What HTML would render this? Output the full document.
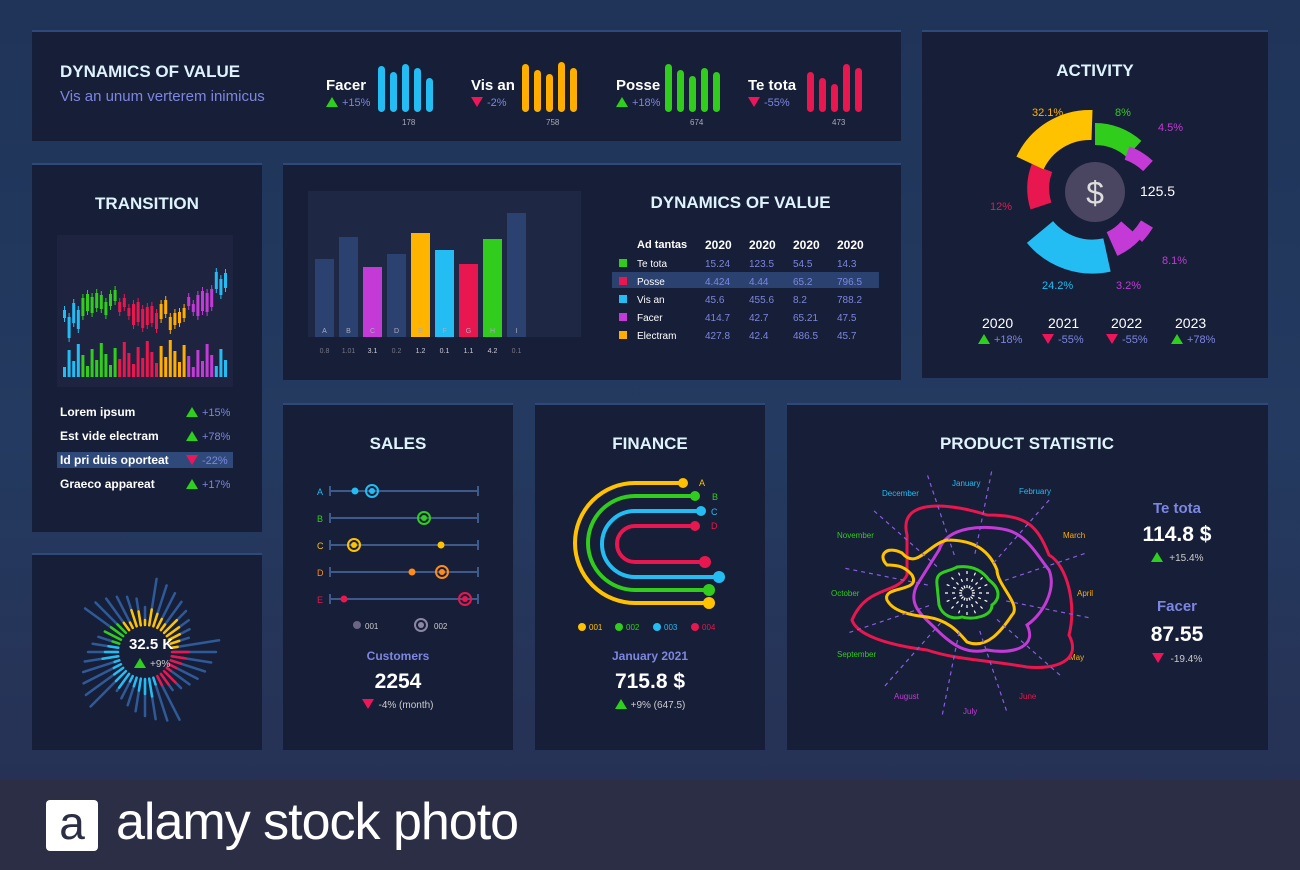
<!DOCTYPE html>
<html><head><meta charset="utf-8"><style>
*{margin:0;padding:0;box-sizing:border-box}
body{width:1300px;height:870px;overflow:hidden;background:linear-gradient(180deg,#1f3458 0%,#243a60 50%,#272f52 100%);font-family:"Liberation Sans",sans-serif;color:#fff;position:relative}
.p{position:absolute;background:#171e37;border-top:2px solid #2f4a78}
.t{position:absolute;font-weight:bold;font-size:17px;color:#dff3ff;text-align:center;width:100%}
.ab{position:absolute;font-size:11px}
svg{position:absolute;left:0;top:0}
.up{color:#7d86e0}
.tri-u{display:inline-block;width:0;height:0;border-left:6px solid transparent;border-right:6px solid transparent;border-bottom:10px solid #2ed01e;vertical-align:-1px;margin-right:4px}
.tri-d{display:inline-block;width:0;height:0;border-left:6px solid transparent;border-right:6px solid transparent;border-top:10px solid #f0155a;vertical-align:-1px;margin-right:4px}
.bar{position:absolute;left:0;right:0;top:780px;height:90px;background:#2b2e45}
.logo{position:absolute;left:46px;top:800px;width:52px;height:51px;background:#fff;border-radius:4px;color:#2b2e45;font-size:46px;text-align:center;line-height:46px}
.lt{position:absolute;left:116px;top:792px;font-size:52px;color:#fff;letter-spacing:-1px}
td{font-size:10px;padding:0}
</style></head><body>

<div class="p" style="left:32px;top:30px;width:869px;height:111px">
<div style="position:absolute;left:28px;top:30px;font-size:17px;font-weight:bold;color:#dff3ff">DYNAMICS OF VALUE</div>
<div style="position:absolute;left:28px;top:56px;font-size:15px;color:#7d86e0">Vis an unum verterem inimicus</div>
<svg width="869" height="111" id="topsvg"></svg>
<div style="position:absolute;left:294px;top:45px;font-size:15px;font-weight:bold">Facer</div>
<div style="position:absolute;left:294px;top:65px;font-size:11px" class="up"><span class="tri-u"></span>+15%</div>
<div style="position:absolute;left:439px;top:45px;font-size:15px;font-weight:bold">Vis an</div>
<div style="position:absolute;left:439px;top:65px;font-size:11px" class="up"><span class="tri-d"></span>-2%</div>
<div style="position:absolute;left:584px;top:45px;font-size:15px;font-weight:bold">Posse</div>
<div style="position:absolute;left:584px;top:65px;font-size:11px" class="up"><span class="tri-u"></span>+18%</div>
<div style="position:absolute;left:716px;top:45px;font-size:15px;font-weight:bold">Te tota</div>
<div style="position:absolute;left:716px;top:65px;font-size:11px" class="up"><span class="tri-d"></span>-55%</div>
<div class="ab" style="left:370px;top:86px;font-size:8px;color:#aab">178</div>
<div class="ab" style="left:514px;top:86px;font-size:8px;color:#aab">758</div>
<div class="ab" style="left:658px;top:86px;font-size:8px;color:#aab">674</div>
<div class="ab" style="left:800px;top:86px;font-size:8px;color:#aab">473</div>
</div>

<div class="p" style="left:922px;top:30px;width:346px;height:348px">
<div class="t" style="top:29px">ACTIVITY</div>
<svg width="346" height="348">
<circle cx="173" cy="160" r="30" fill="#4a4560"/>
<text x="173" y="172" fill="#ddd" font-size="32" text-anchor="middle" font-family="Liberation Sans">$</text>
<g fill="none" stroke-width="22">
<path d="M119 174 A56 56 0 0 1 120 136" stroke="#e8174f"/>
<path d="M108 131 A66 66 0 0 1 170 93" stroke="#ffc200" stroke-width="30"/>
<path d="M173 102 A58 58 0 0 1 212 117" stroke="#31cd1c"/>
<path d="M205 121 A60 60 0 0 1 226 134" stroke="#c43ad6" stroke-width="14"/>
<path d="M209 198 A56 56 0 0 1 190 212" stroke="#c43ad6" stroke-width="26"/>
<path d="M225 192 A75 75 0 0 1 215 205" stroke="#c43ad6" stroke-width="14"/>
<path d="M185 223 A68 68 0 0 1 118 200" stroke="#23bdf4" stroke-width="34"/>
</g>
<text x="110" y="84" fill="#ffb400" font-size="11">32.1%</text>
<text x="193" y="84" fill="#31cd1c" font-size="11">8%</text>
<text x="236" y="99" fill="#c43ad6" font-size="11">4.5%</text>
<text x="68" y="178" fill="#e8174f" font-size="11">12%</text>
<text x="218" y="164" fill="#fff" font-size="14">125.5</text>
<text x="240" y="232" fill="#c43ad6" font-size="11">8.1%</text>
<text x="120" y="257" fill="#23bdf4" font-size="11">24.2%</text>
<text x="194" y="257" fill="#c43ad6" font-size="11">3.2%</text>
</svg>
<div class="ab" style="left:60px;top:283px;font-size:14px">2020</div>
<div class="ab" style="left:126px;top:283px;font-size:14px">2021</div>
<div class="ab" style="left:189px;top:283px;font-size:14px">2022</div>
<div class="ab" style="left:253px;top:283px;font-size:14px">2023</div>
<div class="ab up" style="left:56px;top:302px"><span class="tri-u"></span>+18%</div>
<div class="ab up" style="left:120px;top:302px"><span class="tri-d"></span>-55%</div>
<div class="ab up" style="left:184px;top:302px"><span class="tri-d"></span>-55%</div>
<div class="ab up" style="left:249px;top:302px"><span class="tri-u"></span>+78%</div>
</div>

<div class="p" style="left:32px;top:163px;width:230px;height:369px">
<div class="t" style="top:29px">TRANSITION</div>
<div style="position:absolute;left:25px;top:70px;width:176px;height:152px;background:#1e2440"></div>
<svg width="230" height="369" id="candles"></svg>
<div class="ab" style="left:28px;top:240px;font-size:12px;font-weight:bold">Lorem ipsum</div>
<div class="ab" style="left:28px;top:264px;font-size:12px;font-weight:bold">Est vide electram</div>
<div style="position:absolute;left:25px;top:287px;width:176px;height:16px;background:#2f4a7a"></div>
<div class="ab" style="left:28px;top:288px;font-size:12px;font-weight:bold">Id pri duis oporteat</div>
<div class="ab" style="left:28px;top:312px;font-size:12px;font-weight:bold">Graeco appareat</div>
<div class="ab up" style="left:154px;top:242px"><span class="tri-u"></span>+15%</div>
<div class="ab up" style="left:154px;top:266px"><span class="tri-u"></span>+78%</div>
<div class="ab up" style="left:154px;top:290px"><span class="tri-d"></span>-22%</div>
<div class="ab up" style="left:154px;top:314px"><span class="tri-u"></span>+17%</div>
</div>

<div class="p" style="left:283px;top:163px;width:618px;height:217px">
<div style="position:absolute;left:25px;top:26px;width:273px;height:146px;background:#1e2744"></div>
<svg width="618" height="217" id="bars"></svg>
<div style="position:absolute;left:330px;top:28px;width:255px;text-align:center;font-size:17px;font-weight:bold;color:#dff3ff">DYNAMICS OF VALUE</div>
<div style="position:absolute;left:329px;top:107px;width:267px;height:16px;background:#2b4270"></div>
<table style="position:absolute;left:336px;top:70px;border-collapse:collapse">
<tr style="height:20px"><td style="width:18px"></td><td style="width:68px;font-size:11px;font-weight:bold">Ad tantas</td><td style="width:44px;font-size:12px;font-weight:bold">2020</td><td style="width:44px;font-size:12px;font-weight:bold">2020</td><td style="width:44px;font-size:12px;font-weight:bold">2020</td><td style="font-size:12px;font-weight:bold">2020</td></tr>
<tr style="height:18px"><td><i style="display:inline-block;width:8px;height:8px;background:#31cd1c"></i></td><td>Te tota</td><td class="up">15.24</td><td class="up">123.5</td><td class="up">54.5</td><td class="up">14.3</td></tr>
<tr style="height:18px"><td><i style="display:inline-block;width:8px;height:8px;background:#e8174f"></i></td><td>Posse</td><td class="up">4.424</td><td class="up">4.44</td><td class="up">65.2</td><td class="up">796.5</td></tr>
<tr style="height:18px"><td><i style="display:inline-block;width:8px;height:8px;background:#23bdf4"></i></td><td>Vis an</td><td class="up">45.6</td><td class="up">455.6</td><td class="up">8.2</td><td class="up">788.2</td></tr>
<tr style="height:18px"><td><i style="display:inline-block;width:8px;height:8px;background:#c43ad6"></i></td><td>Facer</td><td class="up">414.7</td><td class="up">42.7</td><td class="up">65.21</td><td class="up">47.5</td></tr>
<tr style="height:18px"><td><i style="display:inline-block;width:8px;height:8px;background:#ffae00"></i></td><td>Electram</td><td class="up">427.8</td><td class="up">42.4</td><td class="up">486.5</td><td class="up">45.7</td></tr>
</table>
</div>

<div class="p" style="left:32px;top:553px;width:230px;height:197px">
<svg width="230" height="197" id="radial"></svg>
<div class="ab" style="left:97px;top:81px;font-size:15px;font-weight:bold">32.5 K</div>
<div class="ab" style="left:102px;top:103px;font-size:10px;color:#ccc"><span class="tri-u"></span>+9%</div>
</div>

<div class="p" style="left:283px;top:403px;width:230px;height:347px">
<div class="t" style="top:29px">SALES</div>
<svg width="230" height="347">
<g stroke="#3d5a8a" stroke-width="2"><line x1="47" y1="86" x2="195" y2="86"/><line x1="47" y1="113" x2="195" y2="113"/><line x1="47" y1="140" x2="195" y2="140"/><line x1="47" y1="167" x2="195" y2="167"/><line x1="47" y1="194" x2="195" y2="194"/>
<line x1="47" y1="81" x2="47" y2="91"/><line x1="195" y1="81" x2="195" y2="91"/><line x1="47" y1="108" x2="47" y2="118"/><line x1="195" y1="108" x2="195" y2="118"/><line x1="47" y1="135" x2="47" y2="145"/><line x1="195" y1="135" x2="195" y2="145"/><line x1="47" y1="162" x2="47" y2="172"/><line x1="195" y1="162" x2="195" y2="172"/><line x1="47" y1="189" x2="47" y2="199"/><line x1="195" y1="189" x2="195" y2="199"/></g>
<g font-size="9"><text x="34" y="90" fill="#23bdf4">A</text><text x="34" y="117" fill="#31cd1c">B</text><text x="34" y="144" fill="#ffc200">C</text><text x="34" y="171" fill="#ff8c1a">D</text><text x="34" y="198" fill="#e8174f">E</text></g>
<circle cx="72" cy="86" r="3.5" fill="#23bdf4"/><circle cx="89" cy="86" r="6" fill="none" stroke="#23bdf4" stroke-width="2"/><circle cx="89" cy="86" r="3" fill="#23bdf4"/>
<circle cx="141" cy="113" r="6" fill="none" stroke="#31cd1c" stroke-width="2"/><circle cx="141" cy="113" r="3" fill="#31cd1c"/>
<circle cx="71" cy="140" r="6" fill="none" stroke="#ffc200" stroke-width="2"/><circle cx="71" cy="140" r="3" fill="#ffc200"/><circle cx="158" cy="140" r="3.5" fill="#ffc200"/>
<circle cx="129" cy="167" r="3.5" fill="#ff8c1a"/><circle cx="159" cy="167" r="6" fill="none" stroke="#ff8c1a" stroke-width="2"/><circle cx="159" cy="167" r="3" fill="#ff8c1a"/>
<circle cx="61" cy="194" r="3.5" fill="#e8174f"/><circle cx="182" cy="194" r="6" fill="none" stroke="#e8174f" stroke-width="2"/><circle cx="182" cy="194" r="3" fill="#e8174f"/>
<circle cx="74" cy="220" r="4" fill="#6a6585"/><text x="82" y="224" fill="#ccc" font-size="8">001</text>
<circle cx="138" cy="220" r="6" fill="none" stroke="#8c86a5" stroke-width="2"/><circle cx="138" cy="220" r="3" fill="#8c86a5"/><text x="151" y="224" fill="#ccc" font-size="8">002</text>
</svg>
<div class="ab" style="left:0;width:230px;text-align:center;top:244px;font-size:12px;font-weight:bold;color:#7d86e0">Customers</div>
<div class="ab" style="left:0;width:230px;text-align:center;top:265px;font-size:21px;font-weight:bold">2254</div>
<div class="ab" style="left:0;width:230px;text-align:center;top:294px;font-size:10px;color:#ccc"><span class="tri-d"></span>-4% (month)</div>
</div>

<div class="p" style="left:535px;top:403px;width:230px;height:347px">
<div class="t" style="top:29px">FINANCE</div>
<svg width="230" height="347" fill="none" stroke-width="4" stroke-linecap="round">
<path d="M148 78 H100 A60 60 0 0 0 100 198 H174" stroke="#ffc200"/>
<path d="M160 91 H100 A47 47 0 0 0 100 185 H174" stroke="#31cd1c"/>
<path d="M166 106 H100 A33 33 0 0 0 100 172 H184" stroke="#23bdf4"/>
<path d="M160 121 H100 A18 18 0 0 0 100 157 H170" stroke="#e8174f"/>
<g stroke="none"><circle cx="148" cy="78" r="5" fill="#ffc200"/><circle cx="160" cy="91" r="5" fill="#31cd1c"/><circle cx="166" cy="106" r="5" fill="#23bdf4"/><circle cx="160" cy="121" r="5" fill="#e8174f"/>
<circle cx="170" cy="157" r="6" fill="#e8174f"/><circle cx="184" cy="172" r="6" fill="#23bdf4"/><circle cx="174" cy="185" r="6" fill="#31cd1c"/><circle cx="174" cy="198" r="6" fill="#ffc200"/>
<g font-size="9" stroke="none"><text x="164" y="81" fill="#ffc200">A</text><text x="177" y="95" fill="#31cd1c">B</text><text x="176" y="110" fill="#23bdf4">C</text><text x="176" y="124" fill="#e8174f">D</text>
<circle cx="47" cy="222" r="4" fill="#ffc200"/><text x="54" y="225" fill="#ffc200" font-size="8">001</text>
<circle cx="84" cy="222" r="4" fill="#31cd1c"/><text x="91" y="225" fill="#31cd1c" font-size="8">002</text>
<circle cx="122" cy="222" r="4" fill="#23bdf4"/><text x="129" y="225" fill="#23bdf4" font-size="8">003</text>
<circle cx="160" cy="222" r="4" fill="#e8174f"/><text x="167" y="225" fill="#e8174f" font-size="8">004</text></g></g>
</svg>
<div class="ab" style="left:0;width:230px;text-align:center;top:244px;font-size:12px;font-weight:bold;color:#7d86e0">January 2021</div>
<div class="ab" style="left:0;width:230px;text-align:center;top:265px;font-size:21px;font-weight:bold">715.8 $</div>
<div class="ab" style="left:0;width:230px;text-align:center;top:294px;font-size:10px;color:#ccc"><span class="tri-u"></span>+9% (647.5)</div>
</div>

<div class="p" style="left:787px;top:403px;width:481px;height:347px">
<div class="t" style="top:29px;width:480px">PRODUCT STATISTIC</div>
<svg width="481" height="347" id="prod">
<g font-size="8">
<text x="95" y="91" fill="#23bdf4">December</text><text x="165" y="81" fill="#23bdf4">January</text><text x="232" y="89" fill="#23bdf4">February</text>
<text x="50" y="133" fill="#31cd1c">November</text><text x="276" y="133" fill="#ffae00">March</text>
<text x="44" y="191" fill="#31cd1c">October</text><text x="290" y="191" fill="#ffae00">April</text>
<text x="50" y="252" fill="#31cd1c">September</text><text x="282" y="255" fill="#ffae00">May</text>
<text x="107" y="294" fill="#c43ad6">August</text><text x="232" y="294" fill="#e8174f">June</text><text x="176" y="309" fill="#c43ad6">July</text>
</g>
<g fill="none" stroke-width="3">
<path d="M120 130 C110 90 170 100 200 110 C240 110 250 120 262 150 C280 160 290 200 282 230 C295 255 270 265 240 262 C200 255 170 255 140 245 C100 240 70 230 65 215 C80 180 110 190 120 170 Z" stroke="#e8174f"/>
<path d="M152 145 C160 120 200 120 220 125 C240 130 250 150 262 165 C270 185 255 210 240 220 C250 240 230 250 200 245 C180 250 165 240 150 225 C135 210 120 200 130 180 Z" stroke="#c43ad6"/>
<path d="M100 160 C90 150 100 140 115 148 C130 165 140 140 160 135 C180 135 200 140 210 165 C210 180 235 200 225 210 C215 225 200 245 180 237 C170 225 160 215 140 212 C120 210 105 205 100 195 C95 180 135 188 125 170 C118 162 112 160 100 160 Z" stroke="#ffc200"/>
<path d="M150 180 C148 165 160 168 170 162 C185 160 195 165 202 175 C215 185 212 195 205 200 C205 212 185 215 175 212 C165 215 155 210 152 200 Z" stroke="#31cd1c"/>
</g>
<g stroke="#8a5ce0" stroke-width="1.2" stroke-dasharray="4 4" id="rays"></g>
</svg>
<div class="ab" style="left:340px;top:95px;width:100px;text-align:center;font-size:15px;font-weight:bold;color:#7d86e0">Te tota</div>
<div class="ab" style="left:340px;top:118px;width:100px;text-align:center;font-size:21px;font-weight:bold">114.8 $</div>
<div class="ab" style="left:340px;top:147px;width:100px;text-align:center;font-size:10px;color:#ccc"><span class="tri-u"></span>&nbsp;+15.4%</div>
<div class="ab" style="left:340px;top:193px;width:100px;text-align:center;font-size:15px;font-weight:bold;color:#7d86e0">Facer</div>
<div class="ab" style="left:340px;top:218px;width:100px;text-align:center;font-size:21px;font-weight:bold">87.55</div>
<div class="ab" style="left:340px;top:248px;width:100px;text-align:center;font-size:10px;color:#ccc"><span class="tri-d"></span>&nbsp;-19.4%</div>
</div>

<div class="bar"></div>
<div class="logo">a</div>
<div class="lt">alamy stock photo</div>

<script>
var NS="http://www.w3.org/2000/svg";
function el(p,t,a){var e=document.createElementNS(NS,t);for(var k in a)e.setAttribute(k,a[k]);p.appendChild(e);return e}
var ts=document.getElementById('topsvg');
var groups=[[346,'#23bdf4',[46,40,48,44,34]],[490,'#ffae00',[48,42,38,50,44]],[633,'#31cd1c',[48,42,36,44,40]],[775,'#e8174f',[40,34,28,48,44]]];
groups.forEach(function(g){g[2].forEach(function(h,i){el(ts,'rect',{x:g[0]+i*12,y:80-h,width:7,height:h,rx:3.5,fill:g[1]})})});
var bs=document.getElementById('bars');
var bd=[[78,'#2b4270','A','0.8'],[100,'#2b4270','B','1.01'],[70,'#c43ad6','C','3.1'],[83,'#2b4270','D','0.2'],[104,'#ffb400','E','1.2'],[87,'#23bdf4','F','0.1'],[73,'#e8174f','G','1.1'],[98,'#31cd1c','H','4.2'],[124,'#2b4270','I','0.1']];
bd.forEach(function(b,i){var x=32+i*24;var h=b[0];el(bs,'rect',{x:x,y:172-h,width:19,height:h,fill:b[1]});
var t=el(bs,'text',{x:x+9.5,y:168,fill:'#aab','font-size':7,'text-anchor':'middle'});t.textContent=b[2];
var v=el(bs,'text',{x:x+9.5,y:188,fill:b[1]=='#2b4270'?'#778':'#ccd','font-size':7,'text-anchor':'middle'});v.textContent=b[3];});
var cs=document.getElementById('candles');
var cols=['#23bdf4','#23bdf4','#31cd1c','#31cd1c','#31cd1c','#31cd1c','#e8174f','#e8174f','#e8174f','#e8174f','#e8174f','#ffae00','#ffae00','#ffae00','#c43ad6','#c43ad6','#c43ad6','#23bdf4','#23bdf4'];
var ys=[150,140,132,128,134,130,135,138,140,142,145,140,150,142,135,130,125,112,110];
for(var i=0;i<36;i++){var x=31+i*4.6;var c=cols[Math.floor(i/36*cols.length)];var y=ys[Math.floor(i/36*ys.length)]+((i*7)%11)-5;var h=8+(i*13)%14;
el(cs,'line',{x1:x+1.5,y1:y-4,x2:x+1.5,y2:y+h+4,stroke:c,'stroke-width':1});el(cs,'rect',{x:x,y:y,width:3,height:h,fill:c});
var vh=10+(i*17)%28;el(cs,'rect',{x:x,y:212-vh,width:3,height:vh,fill:c});}
var rs=document.getElementById('radial');var cx=113,cy=97;
for(var i=0;i<40;i++){var a=i/40*Math.PI*2-Math.PI/2;var ca=Math.cos(a),sa=Math.sin(a);
var L=45+((i*29)%33);el(rs,'line',{x1:cx+ca*28,y1:cy+sa*28,x2:cx+ca*L,y2:cy+sa*L,stroke:'#2e5a99','stroke-width':2.5,'stroke-linecap':'round'});}
for(var i=0;i<40;i++){var a=i/40*Math.PI*2-Math.PI/2;var ca=Math.cos(a),sa=Math.sin(a);var f=i/40;
var c=f<0.25?'#ffc200':f<0.45?'#e8174f':f<0.78?'#23bdf4':f<0.88?'#31cd1c':'#ffc200';
var l2=32+((i*11)%14);el(rs,'line',{x1:cx+ca*27,y1:cy+sa*27,x2:cx+ca*l2,y2:cy+sa*l2,stroke:c,'stroke-width':2.5,'stroke-linecap':'round'});}
var rg=document.getElementById('rays');var px=180,py=188;
for(var i=0;i<12;i++){var a=i/12*Math.PI*2-Math.PI/2+0.2;el(rg,'line',{x1:px+Math.cos(a)*40,y1:py+Math.sin(a)*40,x2:px+Math.cos(a)*125,y2:py+Math.sin(a)*125});}
for(var i=0;i<16;i++){var a=i/16*Math.PI*2;el(rg,'line',{x1:px+Math.cos(a)*5,y1:py+Math.sin(a)*5,x2:px+Math.cos(a)*25,y2:py+Math.sin(a)*25,stroke:'#fff','stroke-dasharray':'3 4'});}
</script>
</body></html>
